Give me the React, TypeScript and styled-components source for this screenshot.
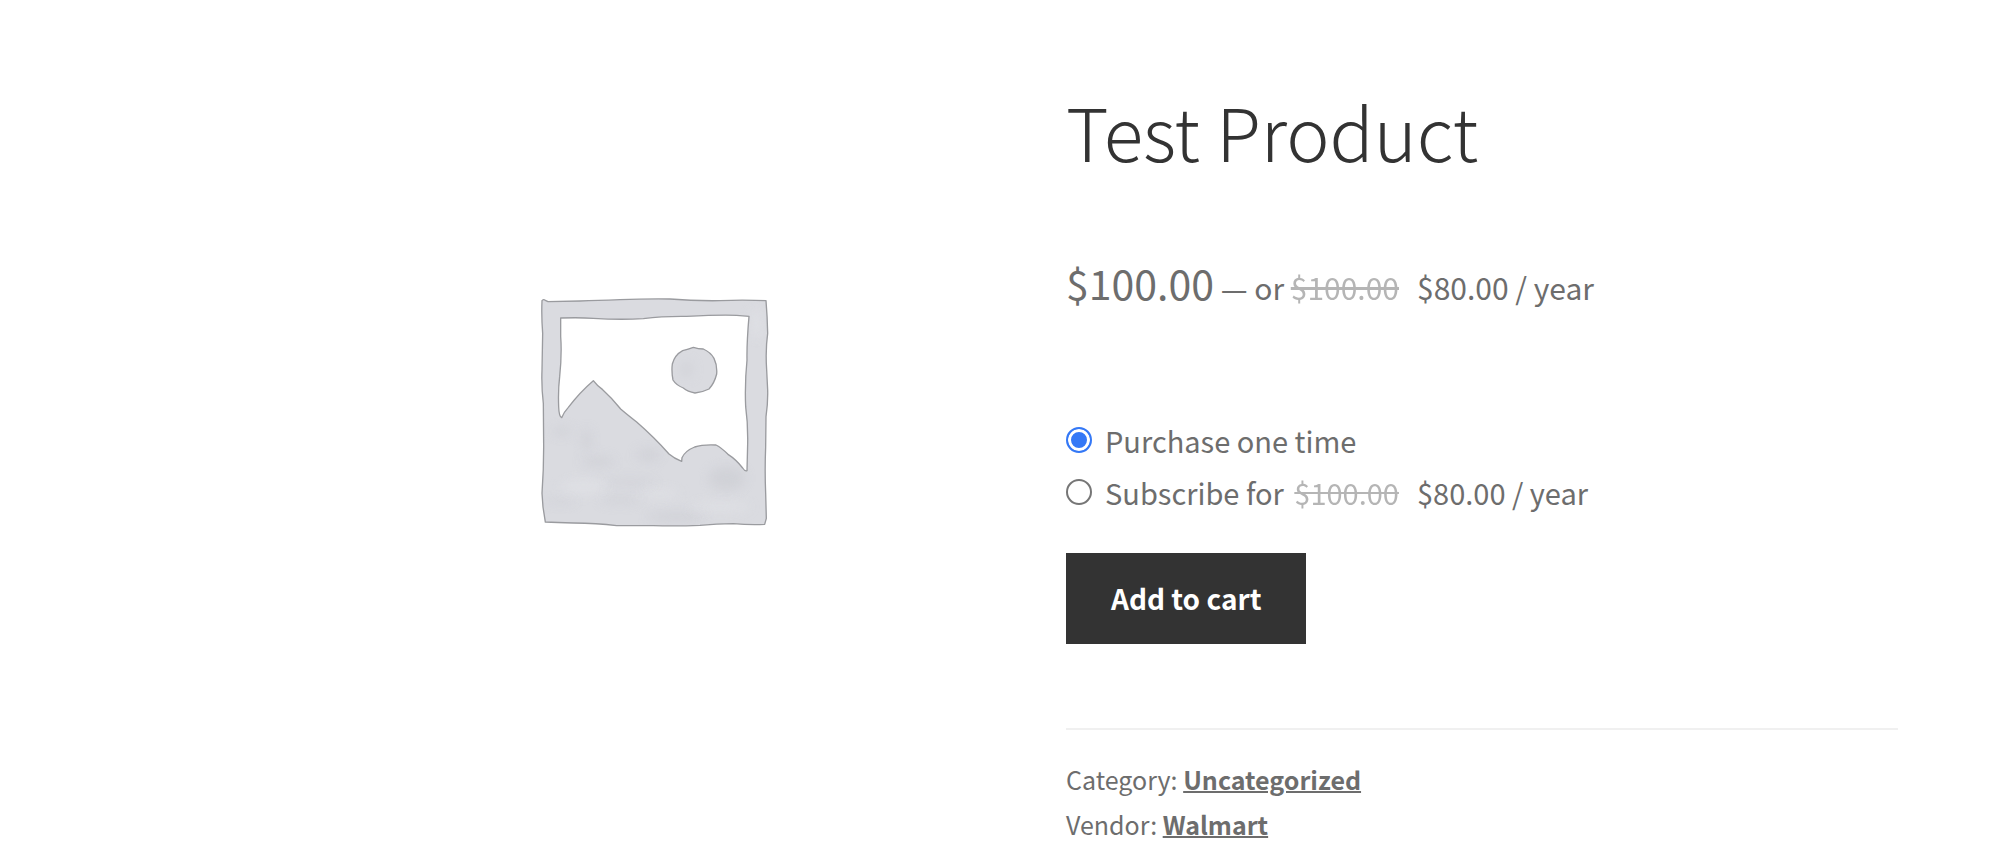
import React, { useState } from "react";
import styled, { createGlobalStyle } from "styled-components";

const GlobalStyle = createGlobalStyle`
  * { box-sizing: border-box; }
  body {
    margin: 0;
    background: #ffffff;
    color: #6d6d6d;
    font-family: "Source Sans Pro", "Noto Sans CJK SC", "Noto Sans", sans-serif;
    font-size: 29px;
    line-height: 52px;
  }
`;

const Product = styled.main`
  display: grid;
  grid-template-columns: 1fr 1fr;
  padding: 78px 92px 10px 234px;
`;

const Gallery = styled.figure`
  display: flex;
  justify-content: center;
  align-items: flex-start;
  margin: 0;
  padding: 202px 0 0 10px;
`;

const Summary = styled.section`
  min-width: 0;
`;

const Title = styled.h1`
  margin: 0;
  color: #333333;
  font-size: 73px;
  font-weight: 300;
  line-height: 104px;
`;

const Price = styled.p`
  margin: 70px 0 0;
  font-size: 41px;
  line-height: 60px;
`;

const Offer = styled.span`
  font-size: 30px;
`;

const OldPrice = styled.del`
  margin-right: 18px;
  opacity: 0.5;
`;

const Options = styled.fieldset`
  display: flex;
  flex-direction: column;
  margin: 97px 0 0;
  padding: 0;
  border: 0;
`;

const Option = styled.label`
  display: flex;
  align-items: center;
  gap: 13px;
`;

const OptionPrice = styled.span`
  margin-left: 4px;
`;

const Radio = styled.input`
  appearance: none;
  flex: none;
  width: 26px;
  height: 26px;
  margin: 0;
  border: 2px solid #767676;
  border-radius: 50%;
  background: #ffffff;

  &:checked {
    border-color: #3478f6;
    background: #3478f6;
    box-shadow: inset 0 0 0 3px #ffffff;
  }
`;

const CartButton = styled.button`
  display: block;
  margin: 35px 0 0;
  padding: 19px 45px 20px;
  border: 0;
  background: #333333;
  color: #ffffff;
  font: inherit;
  font-size: 28px;
  font-weight: 700;
  cursor: pointer;
`;

const Meta = styled.div`
  margin-top: 84px;
  padding-top: 27px;
  border-top: 2px solid #f0f0f0;
  font-size: 25px;
  line-height: 45px;
`;

const MetaRow = styled.div``;

const MetaLink = styled.a`
  color: #6d6d6d;
  font-weight: 700;
  text-decoration: underline;
  text-decoration-thickness: 2px;
`;

const frame =
  "M66 62 Q70 56 76 61 L84 65 Q130 64 180 63 T300 59 Q380 56 450 57 Q520 63 600 62 Q660 59 705 61 L738 62 Q742 110 743 160 Q736 210 740 270 L743 330 Q744 370 738 410 L737 500 Q734 570 737 640 L739 715 L734 733 Q690 735 640 731 Q590 732 540 736 Q470 739 400 737 L290 737 Q230 729 160 729 Q110 728 76 726 Q67 680 66 640 Q71 570 71 500 L70 370 Q64 320 66 270 L68 160 Q64 110 66 62 Z";
const opening =
  "M122 114 Q180 112 220 115 Q300 120 370 116 Q430 108 500 109 Q600 104 650 106 L687 109 Q680 190 681 240 Q674 310 677 380 Q684 430 683 490 L681 572 Q675 575 668 564 Q648 538 624 523 Q604 503 588 495 Q548 493 524 501 Q496 512 486 533 L485 544 Q462 535 447 522 Q404 473 350 426 Q318 401 302 387 Q276 354 248 329 Q231 317 220 302 Q180 336 145 382 Q132 396 125 413 Q117 410 116 380 Q114 330 119 290 Q126 220 122 170 Z";
const sun =
  "M488 212 Q505 207 520 202 Q535 207 550 207 Q572 217 582 235 Q592 255 590 282 Q583 310 567 327 Q547 337 525 339 Q503 335 490 324 Q468 315 459 300 Q454 275 457 252 Q464 225 488 212 Z";

function PlaceholderImage() {
  return (
    <svg width="270" height="260" viewBox="0 0 810 780" role="img" aria-label="Awaiting product image">
      <defs>
        <clipPath id="paper">
          <path d={`${frame} ${opening}`} clipRule="evenodd" />
        </clipPath>
        <filter id="wash" x="-100%" y="-200%" width="300%" height="500%">
          <feGaussianBlur stdDeviation="16" />
        </filter>
      </defs>
      <path d={`${frame} ${opening}`} fill="#dadbe0" fillRule="evenodd" />
      <g clipPath="url(#paper)">
        <g fill="#cbccd2" opacity="0.6">
          <ellipse filter="url(#wash)" cx="385" cy="525" rx="36" ry="18" />
          <ellipse filter="url(#wash)" cx="235" cy="545" rx="50" ry="14" />
          <ellipse filter="url(#wash)" cx="125" cy="455" rx="30" ry="12" />
          <ellipse filter="url(#wash)" cx="330" cy="607" rx="80" ry="9" />
          <ellipse filter="url(#wash)" cx="620" cy="595" rx="55" ry="36" />
          <ellipse filter="url(#wash)" cx="300" cy="660" rx="60" ry="10" />
          <ellipse filter="url(#wash)" cx="470" cy="710" rx="90" ry="14" />
          <ellipse filter="url(#wash)" cx="200" cy="480" rx="14" ry="34" />
          <ellipse filter="url(#wash)" cx="120" cy="665" rx="50" ry="7" />
        </g>
        <g fill="#e2e3e7" opacity="0.6">
          <ellipse filter="url(#wash)" cx="190" cy="620" rx="70" ry="22" />
          <ellipse filter="url(#wash)" cx="420" cy="640" rx="60" ry="14" />
          <ellipse filter="url(#wash)" cx="600" cy="680" rx="90" ry="16" />
          <ellipse filter="url(#wash)" cx="710" cy="130" rx="18" ry="50" />
        </g>
      </g>
      <path d={sun} fill="#dadbe0" />
      <ellipse cx="500" cy="268" rx="18" ry="26" fill="#cbccd2" opacity="0.5" filter="url(#wash)" />
      <path d={`${frame} ${opening} ${sun}`} fill="none" stroke="#9a9b9f" strokeWidth="4" strokeLinejoin="round" />
    </svg>
  );
}

export default function App() {
  const [plan, setPlan] = useState("once");
  return (
    <>
      <GlobalStyle />
      <Product>
        <Gallery>
          <PlaceholderImage />
        </Gallery>
        <Summary>
          <Title>Test Product</Title>
          <Price>
            $100.00
            <Offer>
              {" "}— or <OldPrice>$100.00</OldPrice>$80.00 / year
            </Offer>
          </Price>
          <Options aria-label="Purchase options">
            <Option htmlFor="plan-once">
              <Radio
                type="radio"
                id="plan-once"
                name="plan"
                checked={plan === "once"}
                onChange={() => setPlan("once")}
              />
              <span>Purchase one time</span>
            </Option>
            <Option htmlFor="plan-year">
              <Radio
                type="radio"
                id="plan-year"
                name="plan"
                checked={plan === "year"}
                onChange={() => setPlan("year")}
              />
              <span>
                Subscribe for{" "}
                <OptionPrice>
                  <OldPrice>$100.00</OldPrice>$80.00 / year
                </OptionPrice>
              </span>
            </Option>
          </Options>
          <CartButton type="button">Add to cart</CartButton>
          <Meta>
            <MetaRow>
              Category: <MetaLink href="#uncategorized">Uncategorized</MetaLink>
            </MetaRow>
            <MetaRow>
              Vendor: <MetaLink href="#walmart">Walmart</MetaLink>
            </MetaRow>
          </Meta>
        </Summary>
      </Product>
    </>
  );
}
